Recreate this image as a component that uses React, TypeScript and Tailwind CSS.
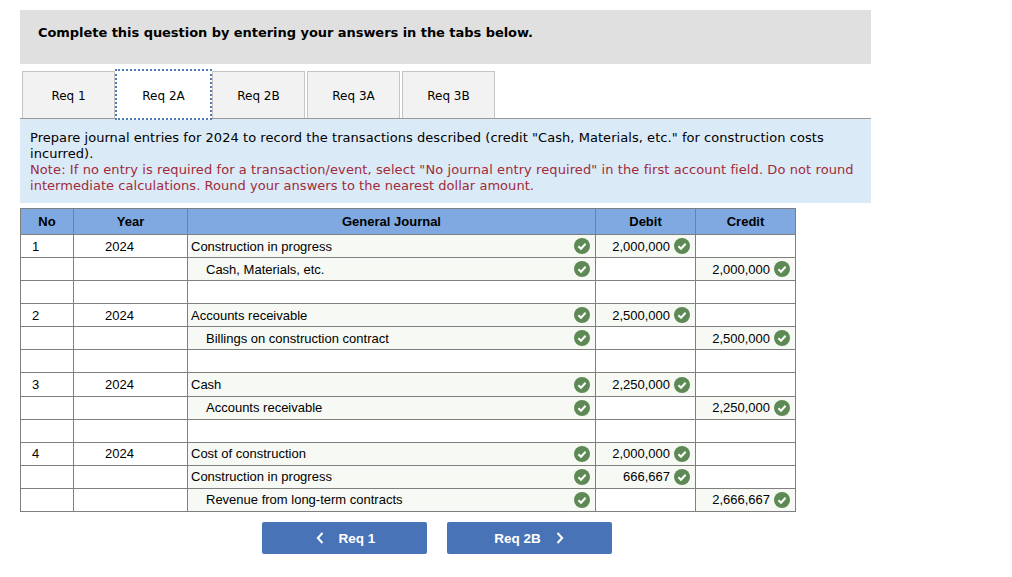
import React from 'react';

interface Row {
  no?: string;
  year?: string;
  account?: string;
  indent?: boolean;
  debit?: string;
  credit?: string;
}

const rows: Row[] = [
  { no: '1', year: '2024', account: 'Construction in progress', debit: '2,000,000' },
  { account: 'Cash, Materials, etc.', indent: true, credit: '2,000,000' },
  {},
  { no: '2', year: '2024', account: 'Accounts receivable', debit: '2,500,000' },
  { account: 'Billings on construction contract', indent: true, credit: '2,500,000' },
  {},
  { no: '3', year: '2024', account: 'Cash', debit: '2,250,000' },
  { account: 'Accounts receivable', indent: true, credit: '2,250,000' },
  {},
  { no: '4', year: '2024', account: 'Cost of construction', debit: '2,000,000' },
  { account: 'Construction in progress', debit: '666,667' },
  { account: 'Revenue from long-term contracts', indent: true, credit: '2,666,667' },
];

const tabs = ['Req 1', 'Req 2A', 'Req 2B', 'Req 3A', 'Req 3B'];

const Check = () => (
  <svg width="16" height="16" viewBox="0 0 16 16" className="shrink-0">
    <circle cx="8" cy="8" r="8" fill="#5d8a54" />
    <path d="M4.4 8.3 L7 10.8 L11.6 5.8" fill="none" stroke="#ffffff" strokeWidth="2" />
  </svg>
);

const Amount = ({ value, nudge }: { value?: string; nudge: string }) => {
  if (!value) return <td className="border border-[#7f7f7f] bg-white" />;
  return (
    <td className="border border-[#7f7f7f] bg-[#f6f9f4] p-0">
      <div className="flex items-center justify-end gap-[4px] pr-[5px]">
        <span className={nudge}>{value}</span>
        <Check />
      </div>
    </td>
  );
};

const App: React.FC = () => {
  return (
    <div className="h-[577px] w-[1012px] overflow-hidden bg-white pl-[20px] pt-[10px] text-black">
      <div className="flex h-[54px] w-[851px] items-start bg-[#e0e0e0] pl-[18px] pt-[15px] font-['DejaVu_Sans',sans-serif] text-[13px] leading-[16px] font-bold tracking-[-0.05px]">
        Complete this question by entering your answers in the tabs below.
      </div>

      <div className="mt-[7px] flex h-[47px] w-[851px] items-stretch gap-[2px] pl-[2px] font-['DejaVu_Sans',sans-serif] text-[12px]">
        {tabs.map((tab, i) =>
          i === 1 ? (
            <div
              key={tab}
              className="relative z-10 -mx-[2px] -my-[2px] flex w-[97px] items-center justify-center border-2 border-dotted border-[#4f7ab8] bg-white pt-[2px]"
            >
              {tab}
            </div>
          ) : (
            <div
              key={tab}
              className="flex w-[93px] items-center justify-center border border-b-0 border-[#c4c4c4] bg-[#f2f2f2] pt-[2px]"
            >
              {tab}
            </div>
          ),
        )}
      </div>

      <div className="h-[85px] w-[851px] border-t border-[#9a9a9a] bg-[#dbeaf7] px-[10px] pt-[11px] font-['DejaVu_Sans',sans-serif] text-[13px] leading-[16px]">
        <p className="tracking-[0.05px]">
          Prepare journal entries for 2024 to record the transactions described (credit "Cash, Materials, etc." for
          construction costs incurred).
        </p>
        <p className="tracking-[0.09px] text-[#a12a3a]">
          Note: If no entry is required for a transaction/event, select "No journal entry required" in the first
          account field. Do not round{' '}
          <span className="tracking-[0.04px]">
            intermediate calculations. Round your answers to the nearest dollar amount.
          </span>
        </p>
      </div>

      <table className="mt-[5px] w-[775px] table-fixed border-collapse font-['Liberation_Sans',sans-serif] text-[13px] leading-[16px]">
        <colgroup>
          <col className="w-[53px]" />
          <col className="w-[114px]" />
          <col className="w-[408px]" />
          <col className="w-[100px]" />
          <col className="w-[100px]" />
        </colgroup>
        <thead>
          <tr className="h-[26px] bg-[#7fa9e0] font-bold">
            <th className="border border-[#7f7f7f]">No</th>
            <th className="border border-[#7f7f7f]">Year</th>
            <th className="border border-[#7f7f7f]">General Journal</th>
            <th className="border border-[#7f7f7f]">Debit</th>
            <th className="border border-[#7f7f7f]">Credit</th>
          </tr>
        </thead>
        <tbody>
          {rows.map((row, i) => {
            // the first rows sit a pixel lower in their cells
            const nudge = i < 6 ? 'pt-[2px]' : '';
            return (
              <tr key={i} className={i === 6 ? 'h-[24px]' : 'h-[23px]'}>
                <td className="border border-[#7f7f7f] p-0 pl-[12px]">
                  <span className={`block -ml-[1px] ${nudge}`}>{row.no}</span>
                </td>
                <td className="border border-[#7f7f7f] p-0 pr-[22px] text-center">
                  <span className={`block ${nudge}`}>{row.year}</span>
                </td>
                {row.account ? (
                  <td className="border border-[#7f7f7f] bg-[#f6f9f4] p-0">
                    <div className={`flex items-center justify-between pr-[5px] ${row.indent ? 'pl-[18px]' : 'pl-[3px]'}`}>
                      <span className={nudge}>{row.account}</span>
                      <Check />
                    </div>
                  </td>
                ) : (
                  <td className="border border-[#7f7f7f]" />
                )}
                <Amount value={row.debit} nudge={nudge} />
                <Amount value={row.credit} nudge={nudge} />
              </tr>
            );
          })}
        </tbody>
      </table>

      <div className="ml-[242px] mt-[10px] flex gap-[20px] font-['Liberation_Sans',sans-serif] text-[13.5px] font-bold text-white">
        <button className="flex h-[32px] w-[165px] items-center justify-center gap-[15px] rounded-[2px] bg-[#4873b7] pl-[2px]">
          <svg width="8" height="12" viewBox="0 0 8 12">
            <path d="M6.5 1 L1.8 6 L6.5 11" fill="none" stroke="#ffffff" strokeWidth="2" />
          </svg>
          <span className="pt-[2px]">Req 1</span>
        </button>
        <button className="flex h-[32px] w-[165px] items-center justify-center gap-[15px] rounded-[2px] bg-[#4873b7] pr-[1px]">
          <span className="pt-[2px]">Req 2B</span>
          <svg width="8" height="12" viewBox="0 0 8 12">
            <path d="M1.5 1 L6.2 6 L1.5 11" fill="none" stroke="#ffffff" strokeWidth="2" />
          </svg>
        </button>
      </div>
    </div>
  );
};

export default App;
